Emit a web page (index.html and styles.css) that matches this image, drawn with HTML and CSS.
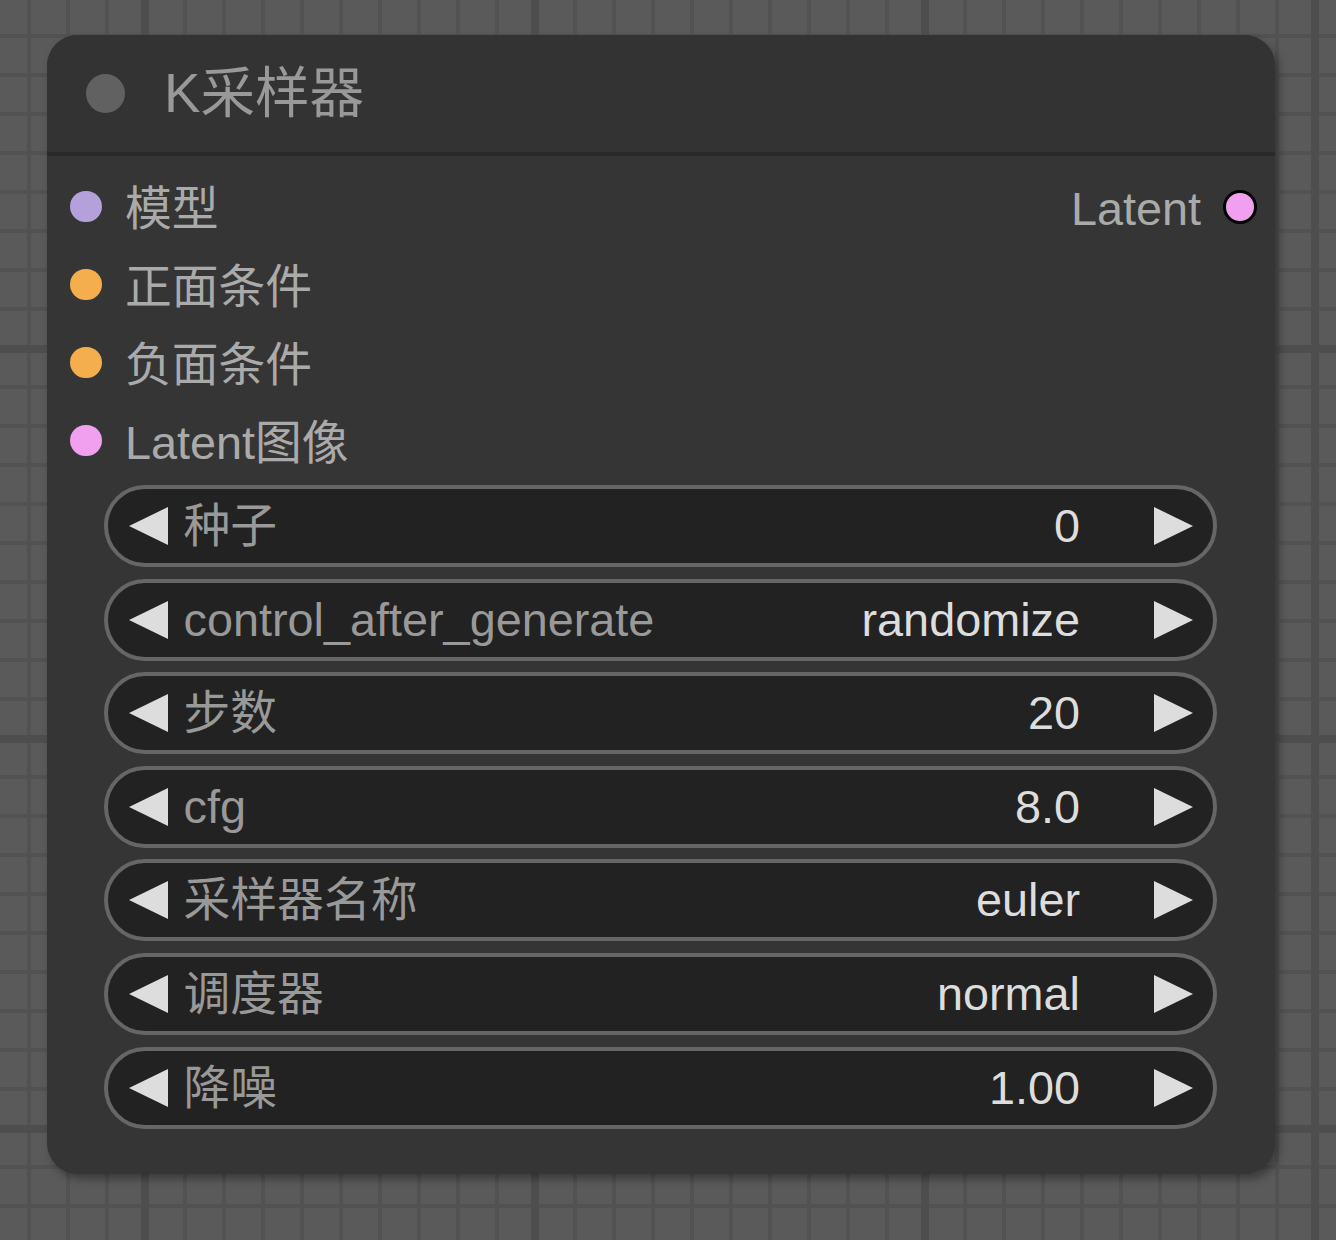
FILE: index.html
```html
<!DOCTYPE html>
<html lang="zh">
<head>
<meta charset="utf-8">
<title>K采样器</title>
<link rel="stylesheet" href="styles.css">
</head>
<body>
<div class="canvas">
  <div class="node">
    <div class="title">
      <span class="title-dot"></span>
      <span class="title-text">K采样器</span>
    </div>
    <div class="body">
      <div class="slots">
        <div class="slot-row">
          <div class="input"><span class="dot model"></span><span class="slot-label">模型</span></div>
          <div class="output"><span class="slot-label">Latent</span><span class="dot out latent"></span></div>
        </div>
        <div class="slot-row">
          <div class="input"><span class="dot cond"></span><span class="slot-label">正面条件</span></div>
        </div>
        <div class="slot-row">
          <div class="input"><span class="dot cond"></span><span class="slot-label">负面条件</span></div>
        </div>
        <div class="slot-row">
          <div class="input"><span class="dot latent"></span><span class="slot-label">Latent图像</span></div>
        </div>
      </div>
      <div class="widgets">
        <div class="widget"><span class="arrow left"></span><span class="w-label">种子</span><span class="w-value">0</span><span class="arrow right"></span></div>
        <div class="widget"><span class="arrow left"></span><span class="w-label">control_after_generate</span><span class="w-value">randomize</span><span class="arrow right"></span></div>
        <div class="widget"><span class="arrow left"></span><span class="w-label">步数</span><span class="w-value">20</span><span class="arrow right"></span></div>
        <div class="widget"><span class="arrow left"></span><span class="w-label">cfg</span><span class="w-value">8.0</span><span class="arrow right"></span></div>
        <div class="widget"><span class="arrow left"></span><span class="w-label">采样器名称</span><span class="w-value">euler</span><span class="arrow right"></span></div>
        <div class="widget"><span class="arrow left"></span><span class="w-label">调度器</span><span class="w-value">normal</span><span class="arrow right"></span></div>
        <div class="widget"><span class="arrow left"></span><span class="w-label">降噪</span><span class="w-value">1.00</span><span class="arrow right"></span></div>
      </div>
    </div>
  </div>
</div>
</body>
</html>
```

FILE: styles.css
```css
html, body {
  margin: 0;
  padding: 0;
}

body {
  font-family: "Liberation Sans", "Noto Sans CJK SC", sans-serif;
  background-color: #5a5a5a;
  background-image:
    linear-gradient(90deg, #4e4e4e 8px, transparent 8px),
    linear-gradient(180deg, #4e4e4e 8px, transparent 8px),
    linear-gradient(90deg, #525252 4px, transparent 4px),
    linear-gradient(180deg, #525252 4px, transparent 4px);
  background-size: 390px 100%, 100% 390px, 39px 100%, 100% 39px;
  background-position: 141px 0, 0 345px, 27px 0, 0 34px;
  width: 1336px;
  height: 1240px;
  overflow: hidden;
}

.canvas {
  padding: 35px 0 0 47px;
}

.node {
  width: 1228px;
  height: 1139px;
  box-sizing: border-box;
  background: #353535;
  border-radius: 31px;
  box-shadow: 4px 5px 9px rgba(0, 0, 0, 0.35);
  display: flex;
  flex-direction: column;
}

.title {
  height: 117px;
  flex: none;
  background: #333333;
  border-radius: 31px 31px 0 0;
  border-bottom: 4px solid #2a2a2a;
  display: flex;
  align-items: center;
  padding-left: 39px;
  gap: 39px;
}

.title-dot {
  width: 39px;
  height: 39px;
  border-radius: 50%;
  background: #616161;
  flex: none;
}

.title-text {
  font-size: 54.6px;
  line-height: 117px;
  color: #999999;
  white-space: nowrap;
}

.body {
  padding: 11.6px 0 0;
}

.slot-row {
  height: 78px;
  display: flex;
  justify-content: space-between;
  align-items: center;
}

.input {
  display: flex;
  align-items: center;
  padding-left: 23.4px;
  gap: 23.4px;
}

.output {
  display: flex;
  align-items: center;
  padding-right: 18px;
  gap: 22px;
}

.slot-label {
  font-size: 46.8px;
  line-height: 71.4px;
  padding-top: 6.6px;
  color: #aaaaaa;
  white-space: nowrap;
}

.dot {
  width: 31.2px;
  height: 31.2px;
  border-radius: 50%;
  flex: none;
}

.dot.out {
  width: 34px;
  height: 34px;
  box-sizing: border-box;
  border: 3.5px solid #000000;
}

.model { background: #b4a1dc; }
.cond { background: #f4ae4e; }
.latent { background: #f1a0f0; }

.widgets {
  margin: 5.4px 0 0 57px;
  width: 1113px;
  display: flex;
  flex-direction: column;
  gap: 11.6px;
}

.widget {
  height: 82px;
  box-sizing: border-box;
  border: 4px solid #666666;
  border-radius: 41px;
  background: #222222;
  display: flex;
  align-items: center;
  padding: 0 20px 0 21px;
}

.arrow {
  width: 0;
  height: 0;
  flex: none;
  border-top: 19.5px solid transparent;
  border-bottom: 19.5px solid transparent;
}

.arrow.left {
  border-right: 39px solid #dddddd;
}

.arrow.right {
  border-left: 39px solid #dddddd;
}

.w-label {
  font-size: 46.8px;
  line-height: 74px;
  color: #999999;
  margin-left: 15.5px;
  white-space: nowrap;
}

.w-value {
  font-size: 46.8px;
  line-height: 74px;
  color: #dddddd;
  margin-left: auto;
  margin-right: 74px;
  white-space: nowrap;
}
```
